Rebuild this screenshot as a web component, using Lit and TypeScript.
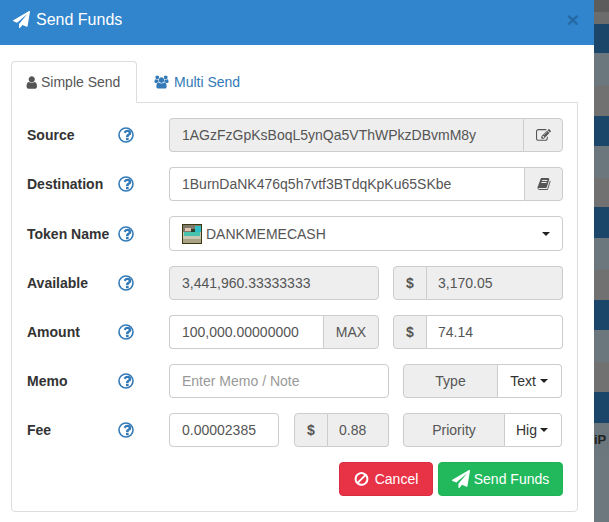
import { LitElement, html, css, svg } from "lit";
import { customElement } from "lit/decorators.js";

const plane = svg`<path d="M1764 11q33 24 27 64l-256 1536q-5 29-32 45-14 8-31 8-11 0-24-5l-453-185-242 295q-18 23-49 23-13 0-22-4-19-7-30.5-23.5t-11.5-36.5v-349l864-1059-1069 925-395-162q-37-14-40-55-2-40 32-59l1664-960q15-9 32-9 20 0 36 11z"/>`;
const icon = (w: number, h: number, vb: string, body: unknown, cls = "") =>
  html`<svg class="ic ${cls}" width=${w} height=${h} viewBox=${vb} fill="currentColor">${body}</svg>`;

const help = () => html`<svg class="help" width="16" height="16" viewBox="0 0 16 16">
  <circle cx="8" cy="8" r="7" fill="none" stroke="#337ab7" stroke-width="1.6"/>
  <g transform="translate(0 -1.33) scale(.0104)" fill="#337ab7"><path d="M1024 1376v-192q0-14-9-23t-23-9h-192q-14 0-23 9t-9 23v192q0 14 9 23t23 9h192q14 0 23-9t9-23zm256-672q0-88-55.500-163t-138.500-116-170-41q-243 0-371 213-15 24 8 42l132 100q7 6 19 6 16 0 25-12 53-68 86-92 34-24 86-24 48 0 85.500 26t37.500 59q0 38-20 61t-68 45q-63 28-115.500 86.500t-52.500 125.500v36q0 14 9 23t23 9h192q14 0 23-9t9-23q0-19 21.500-49.500t54.500-49.500q32-18 49-28.500t46-35 44.500-48 28-60.500 12.500-81z"/></g>
</svg>`;

const STRIPES: [number, string][] = [
  [12, "#5c5c5c"], [12, "#6c6c6c"],
  [29, "#1c4669"], [33, "#6b777d"], [30, "#717171"],
  [30, "#1c4669"], [32, "#6b777d"], [29, "#717171"],
  [31, "#1c4669"], [32, "#6b777d"], [30, "#717171"],
  [30, "#1c4669"], [32, "#6b777d"], [30, "#717171"],
  [31, "#1c4669"], [32, "#6b777d"], [67, "#6d787e"],
];

@customElement("app-root")
export class AppRoot extends LitElement {
  static styles = css`
    :host { display: flex; width: 609px; height: 522px; overflow: hidden; font-family: "Liberation Sans", Arial, sans-serif; font-size: 14px; color: #555; }
    * { box-sizing: border-box; }
    .modal { width: 594px; height: 522px; background: #fff; flex: none; }
    .backdrop { flex: 1; display: flex; flex-direction: column; position: relative; min-width: 0; overflow: hidden; }
    .stripe { flex: none; }
    .clip { position: absolute; left: 0; top: 432px; font: bold 13px "Liberation Sans", sans-serif; color: #222; white-space: nowrap; }
    .head { height: 45px; background: #3085cc; color: #fff; display: flex; align-items: center; padding: 0 15px 6px 13px; font-size: 16px; }
    .head .ic { margin-right: 6px; }
    .close { margin-left: auto; font-size: 21px; font-weight: bold; color: #2569a3; line-height: 1; margin-top: -1px; }
    .body { padding: 16px 16px 0 11px; }
    .tabs { display: flex; height: 42px; margin-bottom: -1px; position: relative; }
    .tab { height: 42px; padding: 0 14px; display: flex; align-items: center; gap: 4px; width: 126px; }
    .tab.active { background: #fff; border: 1px solid #ddd; border-bottom-color: #fff; border-radius: 4px 4px 0 0; color: #555; }
    .tab.link { color: #337ab7; padding-left: 17px; gap: 5px; width: auto; }
    .panel { border: 1px solid #ddd; border-radius: 0 0 4px 4px; height: 410px; padding: 15px 14px 0 15px; display: flex; flex-direction: column; gap: 15px; }
    .row { display: grid; grid-template-columns: 142px 394px; height: 34px; }
    .row.tall { height: 35px; }
    .lab { display: flex; align-items: center; justify-content: space-between; padding-right: 35px; font-weight: bold; color: #333; white-space: nowrap; }
    .help { flex: none; }
    .ctl { display: flex; gap: 14px; min-width: 0; height: 100%; }
    .group { display: flex; flex: none; height: 100%; }
    .box { height: 100%; border: 1px solid #ccc; border-radius: 4px; padding: 0 12px; display: flex; align-items: center; background: #fff; color: #555; white-space: nowrap; overflow: hidden; }
    .ro { background: #eee; }
    .ph { color: #999; }
    .grow { flex: 1; min-width: 0; }
    .addon { height: 100%; border: 1px solid #ccc; background: #eee; display: flex; align-items: center; justify-content: center; border-radius: 4px; color: #555; flex: none; }
    .group > .first { border-radius: 4px 0 0 4px; }
    .group > .last { border-radius: 0 4px 4px 0; border-left: 0; }
    .group > .box.last { border-left: 0; padding-left: 11px; }
    .group > .box.first { border-right: 0; }
    .group > .box.first + .addon { border-left: 1px solid #ccc; }
    .select { justify-content: space-between; padding: 0 12px; }
    .sel-l { display: flex; align-items: center; gap: 4px; }
    .caret { width: 0; height: 0; border-top: 4px solid #222; border-left: 4px solid transparent; border-right: 4px solid transparent; flex: none; }
    .dd { height: 100%; border: 1px solid #ccc; border-left: 0; border-radius: 0 4px 4px 0; background: #fff; color: #333; display: flex; align-items: center; justify-content: flex-end; gap: 3px; padding-right: 13px; flex: 1; white-space: nowrap; }
    .dd.wide { gap: 4px; }
    .actions { display: flex; justify-content: flex-end; gap: 5px; height: 34px; }
    .btn { height: 34px; border-radius: 4px; color: #fff; display: flex; align-items: center; justify-content: center; gap: 4px; }
    .red { background: #e83347; border: 1px solid #d92c40; width: 94px; gap: 6px; }
    .green { background: #21b95c; border: 1px solid #1fb256; width: 125px; }
    .w210 { width: 210px; } .w170 { width: 170px; } .w220 { width: 220px; } .w159 { width: 159px; } .w110 { width: 110px; }
    .w95 { width: 95px; margin-left: 1px; }
    .dollar { width: 34px; font-weight: bold; }
    .edit { width: 40px; } .bookbtn { width: 39px; } .max { width: 56px; }
    .type { width: 95px; } .priority { width: 102px; }
  `;

  render() {
    return html`
      <div class="modal">
        <div class="head">
          ${icon(17, 17, "0 0 1792 1792", plane)}
          <span>Send Funds</span>
          <span class="close">×</span>
        </div>
        <div class="body">
          <div class="tabs">
            <div class="tab active">
              ${icon(11, 13, "192 100 1344 1600", svg`<path d="M1536 1399q0 109-62.500 187t-150.500 78h-854q-88 0-150.500-78t-62.500-187q0-85 8.500-160.500t31.500-152 58.500-131 94-89 134.500-34.500q131 128 313 128t313-128q76 0 134.500 34.500t94 89 58.500 131 31.500 152 8.500 160.500zm-256-887q0 159-112.500 271.500t-271.500 112.500-271.500-112.500-112.500-271.500 112.500-271.500 271.500-112.500 271.500 112.500 112.500 271.500z"/>`)}
              Simple Send
            </div>
            <div class="tab link">
              ${icon(15, 14, "0 0 2048 1792", svg`<path d="M657 896q-162 5-265 128h-134q-82 0-138-40.500t-56-118.500q0-353 124-353 6 0 43.500 21t97.500 42.500 119 21.500q67 0 133-23-5 37-5 66 0 139 81 256zm1071 637q0 120-73 189.500t-194 69.500h-874q-121 0-194-69.500t-73-189.500q0-53 3.500-103.500t14-109 26.500-108.500 43-97.500 62-81 85.500-53.500 111.500-20q10 0 43 21.500t73 48 107 48 135 21.500 135-21.500 107-48 73-48 43-21.500q61 0 111.500 20t85.500 53.500 62 81 43 97.500 26.500 108.500 14 109 3.500 103.500zm-1024-1277q0 106-75 181t-181 75-181-75-75-181 75-181 181-75 181 75 75 181zm704 384q0 159-112.500 271.500t-271.500 112.500-271.500-112.500-112.500-271.500 112.500-271.500 271.500-112.500 271.500 112.500 112.500 271.500zm576 225q0 78-56 118.500t-138 40.500h-134q-103-123-265-128 81-117 81-256 0-29-5-66 66 23 133 23 59 0 119-21.500t97.500-42.500 43.500-21q124 0 124 353zm-128-609q0 106-75 181t-181 75-181-75-75-181 75-181 181-75 181 75 75 181z"/>`)}
              Multi Send
            </div>
          </div>
          <div class="panel">
            <div class="row">
              <div class="lab">Source ${help()}</div>
              <div class="ctl"><div class="group grow">
                <div class="box ro grow first">1AGzFzGpKsBoqL5ynQa5VThWPkzDBvmM8y</div>
                <div class="addon last edit">
                  ${icon(15, 15, "0 0 1792 1792", svg`<path d="M888 1184l116-116-152-152-116 116v56h96v96h56zm440-720q-16-16-33 1l-350 350q-17 17-1 33t33-1l350-350q17-17 1-33zm80 594v190q0 119-84.500 203.500t-203.500 84.500h-832q-119 0-203.500-84.500t-84.500-203.500v-832q0-119 84.500-203.500t203.500-84.500h832q63 0 117 25 15 7 18 23 3 17-9 29l-49 49q-14 14-32 8-23-6-45-6h-832q-66 0-113 47t-47 113v832q0 66 47 113t113 47h832q66 0 113-47t47-113v-126q0-13 9-22l64-64q15-15 35-7t20 29zm-96-738l288 288-672 672h-288v-288zm444 132l-92 92-288-288 92-92q28-28 68-28t68 28l152 152q28 28 28 68t-28 68z"/>`)}
                </div>
              </div></div>
            </div>
            <div class="row">
              <div class="lab">Destination ${help()}</div>
              <div class="ctl"><div class="group grow">
                <div class="box grow first">1BurnDaNK476q5h7vtf3BTdqKpKu65SKbe</div>
                <div class="addon last bookbtn">
                  ${icon(14, 14, "0 0 1792 1792", svg`<path d="M1703 478q40 57 18 129l-275 906q-19 64-76.500 107.500t-122.500 43.500h-923q-77 0-148.500-53.500t-99.500-131.500q-24-67-2-127 0-4 3-27t4-37q1-8-3-21.500t-3-19.500q2-11 8-21t16.500-23.500 16.500-23.500q23-38 45-91.500t30-91.500q3-10 .5-30t-.5-28q3-11 17-28t17-23q21-36 42-92t25-90q1-9-2.500-32t.5-28q4-13 22-30.500t22-22.500q19-26 42.500-84.500t27.500-96.500q1-8-3-25.500t-2-26.500q2-8 9-18t18-23 17-21q8-12 16.500-30.500t15-35 16-36 19.500-32 26.500-23.500 36-11.500 47.500 5.500l-1 3q38-9 51-9h761q74 0 114 56t18 130l-274 906q-36 119-71.500 153.500t-128.500 34.500h-869q-27 0-38 15-11 16-1 43 24 70 144 70h923q29 0 56-15.500t35-41.500l300-987q7-22 5-57 38 15 59 43zm-1064 2q-4 13 2 22.500t20 9.500h608q13 0 25.500-9.500t16.500-22.500l21-64q4-13-2-22.500t-20-9.500h-608q-13 0-25.500 9.500t-16.500 22.500zm-83 256q-4 13 2 22.500t20 9.500h608q13 0 25.500-9.500t16.500-22.500l21-64q4-13-2-22.500t-20-9.500h-608q-13 0-25.500 9.500t-16.500 22.500z"/>`)}
                </div>
              </div></div>
            </div>
            <div class="row tall">
              <div class="lab">Token Name ${help()}</div>
              <div class="ctl">
                <div class="box grow select">
                  <div class="sel-l">
                    <svg width="20" height="20" viewBox="0 0 20 20">
                      <rect width="20" height="20" fill="#3a3a10"/>
                      <rect x="1" y="1" width="18" height="18" fill="#c9c6b4"/>
                      <rect x="1" y="1" width="18" height="7" fill="#7f7a6c"/>
                      <rect x="3" y="4" width="6" height="3" fill="#e2c7b5"/>
                      <rect x="9" y="5" width="5" height="3" fill="#2f3f2f"/>
                      <rect x="13" y="2" width="6" height="6" fill="#2fbfc4"/>
                      <rect x="2" y="8" width="16" height="4" fill="#49c2ac"/>
                      <rect x="1" y="15" width="18" height="4" fill="#a9a284"/>
                    </svg>
                    <span>DANKMEMECASH</span>
                  </div>
                  <span class="caret"></span>
                </div>
              </div>
            </div>
            <div class="row">
              <div class="lab">Available ${help()}</div>
              <div class="ctl">
                <div class="box ro w210">3,441,960.33333333</div>
                <div class="group w170">
                  <div class="addon first dollar">$</div>
                  <div class="box ro grow last">3,170.05</div>
                </div>
              </div>
            </div>
            <div class="row">
              <div class="lab">Amount ${help()}</div>
              <div class="ctl">
                <div class="group w210">
                  <div class="box grow first">100,000.00000000</div>
                  <div class="addon last max">MAX</div>
                </div>
                <div class="group w170">
                  <div class="addon first dollar">$</div>
                  <div class="box grow last">74.14</div>
                </div>
              </div>
            </div>
            <div class="row">
              <div class="lab">Memo ${help()}</div>
              <div class="ctl">
                <div class="box ph w220">Enter Memo / Note</div>
                <div class="group w159">
                  <div class="addon first type">Type</div>
                  <div class="dd wide">Text <span class="caret"></span></div>
                </div>
              </div>
            </div>
            <div class="row">
              <div class="lab">Fee ${help()}</div>
              <div class="ctl">
                <div class="box w110">0.00002385</div>
                <div class="group w95">
                  <div class="addon first dollar">$</div>
                  <div class="box ro grow last">0.88</div>
                </div>
                <div class="group w159">
                  <div class="addon first priority">Priority</div>
                  <div class="dd">Hig<span class="caret"></span></div>
                </div>
              </div>
            </div>
            <div class="row">
              <div></div>
              <div class="actions">
                <div class="btn red">
                  ${icon(15, 16, "0 0 1536 1792", svg`<path d="M1312 893q0-161-87-295l-754 753q137 89 297 89 111 0 211.500-43.500t173.500-116.500 116-174.500 43-212.500zm-999 299l755-754q-135-91-300-91-148 0-273 73t-198 199-73 274q0 162 89 299zm1223-299q0 157-61 300t-163.500 246-245 164-298.500 61-298.500-61-245-164-163.500-246-61-300 61-299.500 163.500-245.500 245-164 298.500-61 298.500 61 245 164 163.500 245.500 61 299.500z"/>`)}
                  Cancel
                </div>
                <div class="btn green">
                  ${icon(18, 18, "0 0 1792 1792", plane)}
                  Send Funds
                </div>
              </div>
            </div>
          </div>
        </div>
      </div>
      <div class="backdrop">
        ${STRIPES.map(([h, c]) => html`<div class="stripe" style="height:${h}px;background:${c}"></div>`)}
        <span class="clip">iP</span>
      </div>
    `;
  }
}
